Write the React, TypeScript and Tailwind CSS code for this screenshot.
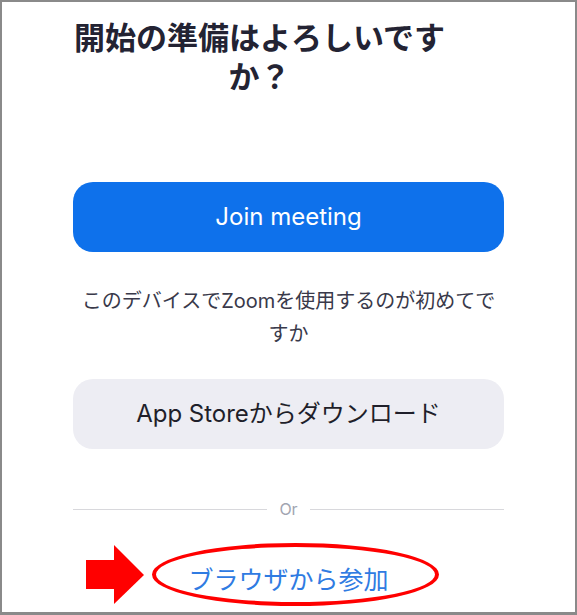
export default function App() {
  const font = { fontFamily: 'Inter, "Noto Sans CJK JP", sans-serif' };

  return (
    <div
      className="w-[577px] h-[615px] bg-white border-2 border-b-[3px] border-[#8a8a8a] overflow-hidden"
      style={font}
    >
      <div className="w-[431px] mx-auto flex flex-col items-center">
        {/* Title */}
        <h1 className="self-start -ml-px mt-4 w-[375px] text-[31px] leading-[39px] font-bold text-[#232333] text-center">
          開始の準備はよろしいですか？
        </h1>

        {/* Join button */}
        <button className="mt-[86px] w-full h-[70px] rounded-[20px] bg-[#0e71eb] text-white text-[24px]">
          Join meeting
        </button>

        {/* First time text */}
        <p className="mt-[33px] w-[424px] text-[20px] leading-[33px] text-[#39394a] text-center">
          このデバイスでZoomを使用するのが初めてですか
        </p>

        {/* App store button */}
        <button className="mt-[28px] w-full h-[70px] rounded-[20px] bg-[#ededf3] text-[#1f1f2a] text-[24px]">
          App Storeからダウンロード
        </button>

        {/* Divider */}
        <div className="mt-[50px] w-full h-5 flex items-center gap-2">
          <div className="flex-1 h-px bg-[#d8d8dc]" />
          <span className="px-1 text-[16px] leading-5 text-[#a1a5b1]">Or</span>
          <div className="flex-1 h-px bg-[#d8d8dc]" />
        </div>

        {/* Browser link */}
        <div className="mt-[45px] w-full flex justify-center">
          <span className="relative inline-block text-[25px] leading-8 text-[#2f7be2]">
            ブラウザから参加
            <span className="absolute left-[-36px] top-[-21px] w-[287px] h-[63px] rounded-[50%] border-4 border-[#ff0000]" />
            <svg
              className="absolute left-[-102px] top-[-19px]"
              width="58"
              height="59"
              viewBox="0 0 58 59"
            >
              <rect x="0" y="15" width="29" height="29" fill="#ff0000" />
              <polygon points="28,0 58,30 28,59" fill="#ff0000" />
            </svg>
          </span>
        </div>
      </div>
    </div>
  );
}
